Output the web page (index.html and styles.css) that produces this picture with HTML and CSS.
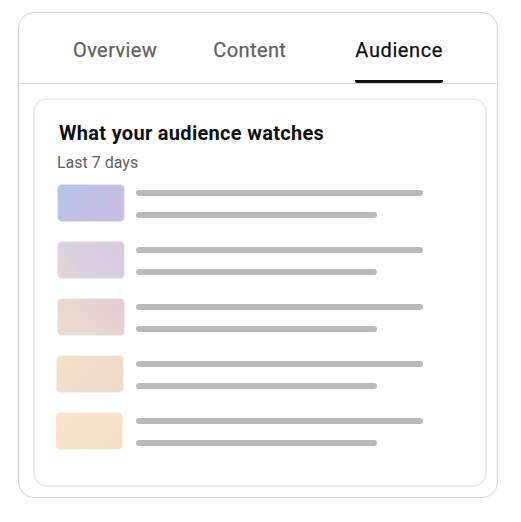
FILE: index.html
```html
<!DOCTYPE html>
<html lang="en">
<head>
  <meta charset="UTF-8" />
  <title>Audience</title>
  <link rel="stylesheet" href="styles.css">
</head>
<body>

  <div class="panel">
    <div class="tabs">
      <div class="tab">Overview</div>
      <div class="tab">Content</div>
      <div class="tab active">Audience</div>
    </div>

    <div class="card">
      <h2>What your audience watches</h2>
      <p class="sub">Last 7 days</p>

      <div class="list">
        <div class="row">
          <div class="thumb t1"></div>
          <div class="lines"><span class="line long"></span><span class="line short"></span></div>
        </div>
        <div class="row">
          <div class="thumb t2"></div>
          <div class="lines"><span class="line long"></span><span class="line short"></span></div>
        </div>
        <div class="row">
          <div class="thumb t3"></div>
          <div class="lines"><span class="line long"></span><span class="line short"></span></div>
        </div>
        <div class="row">
          <div class="thumb t4"></div>
          <div class="lines"><span class="line long"></span><span class="line short"></span></div>
        </div>
        <div class="row">
          <div class="thumb t5"></div>
          <div class="lines"><span class="line long"></span><span class="line short"></span></div>
        </div>
      </div>
    </div>
  </div>

</body>
</html>
```

FILE: styles.css
```css
* {
  box-sizing: border-box;
}
body, html {
  margin: 0;
  padding: 0;
  background: #fff;
  font-family: Roboto, 'Liberation Sans', sans-serif;
}

.panel {
  margin: 12px 0 0 18px;
  width: 480px;
  height: 486px;
  border: 1px solid #d3d3d3;
  border-radius: 16px;
  display: flex;
  flex-direction: column;
  overflow: hidden;
}

.tabs {
  display: flex;
  gap: 56px;
  padding: 0 54px;
  border-bottom: 1px solid #d9d9d9;
}

.tab {
  padding: 25px 0 18px;
  font-size: 20px;
  line-height: 24px;
  font-weight: 400;
  letter-spacing: 0.4px;
  color: #606060;
  border-bottom: 3px solid transparent;
  -webkit-text-stroke: 0.25px currentColor;
}

.tab.active {
  margin-left: auto;
  letter-spacing: 0.6px;
  color: #0f0f0f;
  border-bottom: 3px solid #0f0f0f;
  border-radius: 2px;
}

.card {
  flex: 1;
  margin: 14px 10px 10px 14px;
  border: 2px solid #ececec;
  border-radius: 14px;
  padding: 21px 22px 0;
}

h2 {
  margin: 0;
  font-size: 20px;
  line-height: 24px;
  font-weight: 700;
  letter-spacing: 0.3px;
  color: #0f0f0f;
  padding-left: 2px;
}

.sub {
  margin: 8px 0 0;
  font-size: 16px;
  line-height: 20px;
  color: #606060;
}

.list {
  margin-top: 11px;
  display: flex;
  flex-direction: column;
  gap: 19px;
}

.row {
  display: flex;
  gap: 11px;
}

.thumb {
  width: 68px;
  height: 38px;
  border-radius: 5px;
  flex-shrink: 0;
  border: 1px solid rgba(255, 255, 255, 0.6);
}

.t1 { background: linear-gradient(135deg, #b3c5e9, #cfbde2); }
.t2 { background: linear-gradient(45deg, #e5d6da, #d8d0e0 45%, #dcc8dc); }
.t3 { background: linear-gradient(45deg, #ecdcd0, #e8d6d2 50%, #e5cad4); }
.t4 { background: linear-gradient(135deg, #f3e1c9, #eed8cc); transform: translateX(-1px); }
.t5 { background: linear-gradient(135deg, #fae7cc, #f4dfc8); transform: translateX(-2px); }

.lines {
  display: flex;
  flex-direction: column;
  padding-top: 6px;
  gap: 16px;
}

.line {
  display: block;
  height: 6px;
  border-radius: 3px;
  background: #bababa;
}

.line.long { width: 287px; }
.line.short { width: 241px; }
```
